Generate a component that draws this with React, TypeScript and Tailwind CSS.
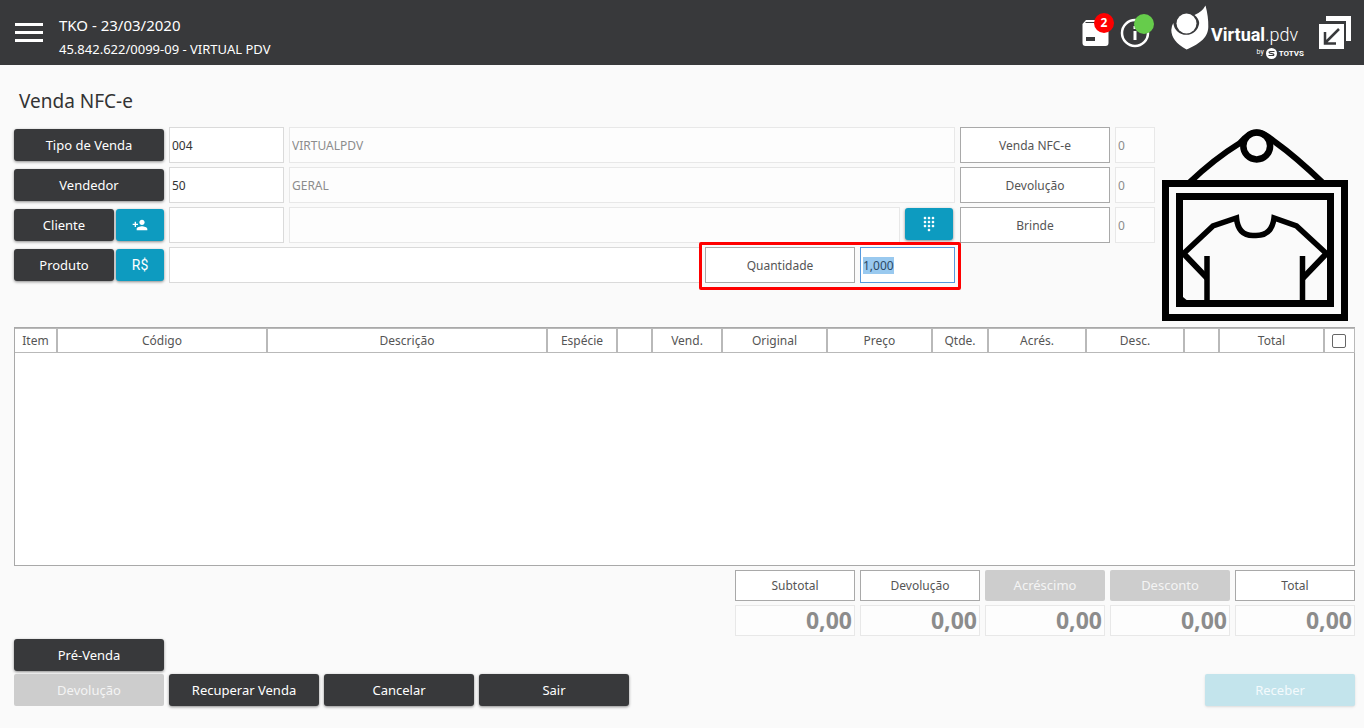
import { useEffect, useRef } from "react";
import type { ReactNode } from "react";
import { MdDialpad, MdPersonAdd } from "react-icons/md";

const COLUMNS = [
  { label: "Item", width: 42 },
  { label: "Código", width: 210 },
  { label: "Descrição", width: 280 },
  { label: "Espécie", width: 70 },
  { label: "", width: 35 },
  { label: "Vend.", width: 70 },
  { label: "Original", width: 105 },
  { label: "Preço", width: 105 },
  { label: "Qtde.", width: 56 },
  { label: "Acrés.", width: 98 },
  { label: "Desc.", width: 98 },
  { label: "", width: 35 },
  { label: "Total", width: 105 },
];

const TOTALS = [
  { label: "Subtotal", action: false },
  { label: "Devolução", action: false },
  { label: "Acréscimo", action: true },
  { label: "Desconto", action: true },
  { label: "Total", action: false },
];

const COUNTERS = ["Venda NFC-e", "Devolução", "Brinde"];

const FIELD = "h-9 min-w-0 border px-[2px] text-xs outline-none";
const EDITABLE = `${FIELD} border-[#dadada] bg-white text-[#333]`;
const READONLY = `${FIELD} border-[#e8e8e8] bg-[#fdfdfd] text-[#8c8c8c]`;
const CAPTION = "flex items-center justify-center border border-[#a9a9a9] bg-white pt-px text-xs text-[#555]";
const DISABLED = "rounded-[2px] bg-[#cdcdcd] pt-px text-[13px] text-[#f4f4f4]";

export default function App() {
  const qtyRef = useRef<HTMLInputElement>(null);

  useEffect(() => {
    qtyRef.current?.focus();
    qtyRef.current?.select();
  }, []);

  return (
    <div className="min-h-screen bg-[#fafafa] font-['Noto_Sans',sans-serif] text-[#333]">
      <Header />
      <main className="pt-5 pr-[9px] pl-[14px]">
        <h1 className="mb-[10px] pl-[5px] text-[19px] leading-8">Venda NFC-e</h1>

        <section className="mb-[6px] flex">
          <div className="flex min-w-0 flex-1 flex-col gap-1">
            <div className="flex items-center gap-[5px]">
              <DarkButton className="w-[150px]">Tipo de Venda</DarkButton>
              <input aria-label="Tipo de Venda" defaultValue="004" className={`${EDITABLE} w-[115px]`} />
              <input aria-label="Descrição do tipo" readOnly value="VIRTUALPDV" className={`${READONLY} flex-1`} />
            </div>
            <div className="flex items-center gap-[5px]">
              <DarkButton className="w-[150px]">Vendedor</DarkButton>
              <input aria-label="Vendedor" defaultValue="50" className={`${EDITABLE} w-[115px]`} />
              <input aria-label="Nome do vendedor" readOnly value="GERAL" className={`${READONLY} flex-1`} />
            </div>
            <div className="flex items-center gap-[5px]">
              <div className="flex gap-[2px]">
                <DarkButton className="w-[100px]">Cliente</DarkButton>
                <BlueButton label="Novo cliente">
                  <MdPersonAdd size={16} />
                </BlueButton>
              </div>
              <input aria-label="Cliente" className={`${EDITABLE} w-[115px]`} />
              <input aria-label="Nome do cliente" readOnly className={`${READONLY} flex-1`} />
              <div className="mr-[2px] pb-[2px]">
                <BlueButton label="Teclado">
                  <MdDialpad size={16} />
                </BlueButton>
              </div>
            </div>
            <div className="flex items-center gap-[5px]">
              <div className="flex gap-[2px]">
                <DarkButton className="w-[100px]">Produto</DarkButton>
                <BlueButton label="Consultar preço">R$</BlueButton>
              </div>
              <input aria-label="Produto" className={`${EDITABLE} flex-1`} />
              <div className="relative flex gap-[5px]">
                <label htmlFor="qty" className={`${CAPTION} h-9 w-[150px]`}>Quantidade</label>
                <input
                  id="qty" ref={qtyRef} defaultValue="1,000"
                  className={`${FIELD} w-[95px] border-[#5599dd] bg-white text-[#333] selection:bg-[#99c9ef] selection:text-[#2c4a66]`}
                />
                <div className="pointer-events-none absolute -inset-x-[6px] -top-[5px] -bottom-[7px] rounded-[2px] border-3 border-[#ff0000]" />
              </div>
            </div>
          </div>

          <div className="ml-[5px] flex flex-col gap-1">
            {COUNTERS.map((label, i) => (
              <div key={label} className="flex gap-[5px]">
                <label htmlFor={`counter-${i}`} className={`${CAPTION} h-9 w-[150px]`}>{label}</label>
                <input id={`counter-${i}`} readOnly value="0" className={`${READONLY} w-10`} />
              </div>
            ))}
          </div>

          <ProductPicture />
        </section>

        {/* Items */}
        <div className="h-[239px] border border-[#a9a9a9] bg-white">
          <table className="w-full table-fixed border-collapse">
            <colgroup>
              {COLUMNS.map((c, i) => (
                <col key={i} style={{ width: c.width }} />
              ))}
              <col style={{ width: 30 }} />
            </colgroup>
            <thead>
              <tr className="h-6">
                {COLUMNS.map((c, i) => (
                  <th key={i} className="border-t border-r-2 border-b border-[#b9b9b9] p-0 text-xs font-normal text-[#555]">
                    {c.label}
                  </th>
                ))}
                <th className="border-t border-r border-b border-[#b9b9b9] p-0">
                  <input
                    type="checkbox" aria-label="Selecionar todos"
                    className="mx-auto block size-[14px] appearance-none rounded-[2px] border border-[#666] bg-white"
                  />
                </th>
              </tr>
            </thead>
          </table>
        </div>

        {/* Totals */}
        <div className="mt-1 flex justify-end gap-[5px]">
          {TOTALS.map((t) => (
            <div key={t.label} className="flex w-[120px] flex-col gap-1">
              {t.action ? (
                <button type="button" disabled className={`${DISABLED} h-[31px]`}>
                  {t.label}
                </button>
              ) : (
                <div className={`${CAPTION} h-[31px]`}>{t.label}</div>
              )}
              <input
                readOnly aria-label={t.label} value="0,00"
                className="h-[31px] w-full border border-[#e8e8e8] bg-[#fdfdfd] px-[2px] text-right text-[23px] font-bold text-[#8c8c8c] outline-none"
              />
            </div>
          ))}
        </div>

        {/* Actions */}
        <div className="mt-[3px] flex items-end justify-between">
          <div className="flex items-end gap-[5px]">
            <div className="flex flex-col gap-[3px]">
              <DarkButton className="w-[150px]">Pré-Venda</DarkButton>
              <button type="button" disabled className={`${DISABLED} h-8 w-[150px]`}>
                Devolução
              </button>
            </div>
            <DarkButton className="w-[150px]">Recuperar Venda</DarkButton>
            <DarkButton className="w-[150px]">Cancelar</DarkButton>
            <DarkButton className="w-[150px]">Sair</DarkButton>
          </div>
          <button type="button" disabled className="h-8 w-[150px] rounded-[2px] bg-[#c3e4ec] pt-px text-[13px] text-[#f4fafc] shadow-sm">
            Receber
          </button>
        </div>
      </main>
    </div>
  );
}

function Header() {
  return (
    <header className="flex h-[65px] items-center bg-[#38393b] pr-[13px] pl-[15px] text-white">
      <button type="button" aria-label="Menu" className="flex flex-col gap-[5px]">
        <span className="h-[3px] w-7 bg-white" />
        <span className="h-[3px] w-7 bg-white" />
        <span className="h-[3px] w-7 bg-white" />
      </button>
      <div className="ml-4 flex-1 pt-2">
        <div className="text-[15px] leading-6">TKO - 23/03/2020</div>
        <div className="text-[13px] leading-6">45.842.622/0099-09 - VIRTUAL PDV</div>
      </div>

      <button type="button" aria-label="Pendências" className="relative">
        <svg width="27" height="27" viewBox="0 0 27 27">
          <path d="M4 1h19l3.5 4v19a3 3 0 0 1-3 3H3.500a3 3 0 0 1-3-3V5Z" fill="#fff" />
          <path d="M3.500 3.500H23" stroke="#38393b" strokeWidth="1" />
          <rect x="4" y="18" width="9" height="4" fill="#38393b" />
        </svg>
        <span className="absolute -top-[6px] left-3 flex size-5 items-center justify-center rounded-full bg-[#ff0000] text-xs font-bold">
          2
        </span>
      </button>
      <button type="button" aria-label="Informações" className="relative ml-[11px]">
        <svg width="30" height="30" viewBox="0 0 30 30" fill="none" stroke="#fff">
          <circle cx="15" cy="15" r="13" strokeWidth="2.500" />
          <path d="M15 13v9M15 8v3" strokeWidth="3" />
        </svg>
        <span className="absolute -top-[4px] left-[14px] size-5 rounded-full bg-[#66cc4b]" />
      </button>

      <div className="ml-[21px] flex items-start">
        <svg width="39" height="46" viewBox="0 0 39 46">
          <path
            d="M34.500 .5C36.500 8 37.500 15 37.300 22C37 34 26 40 15.500 44.500C5 39 .3 32 .3 25Q.5 21 2.300 18A13 13 0 0 0 28.200 18Q27.800 13.500 23.500 10Q31 7 34.500 .5Z"
            fill="#fff"
          />
          <circle cx="15.500" cy="18.500" r="10" fill="#fff" />
        </svg>
        <div className="ml-px w-[93px] pt-[18px] font-[Roboto,sans-serif]">
          <div className="text-lg leading-6">
            <span className="font-bold">Virtual</span>
            <span className="font-light">.pdv</span>
          </div>
          <div className="flex items-center justify-end gap-[2px] text-[8px] leading-[14px]">
            <span className="self-start text-[7px] leading-[10px]">by</span>
            <svg width="11" height="11" viewBox="0 0 11 11">
              <circle cx="5.500" cy="5.500" r="5.500" fill="#fff" />
              <path d="M8.500 3.500H4.500Q2.500 3.500 3.500 5L7.500 6Q8.500 7.500 6.500 7.500H2.500" fill="none" stroke="#38393b" strokeWidth="1.200" />
            </svg>
            <span className="font-bold">TOTVS</span>
          </div>
        </div>
      </div>

      <button type="button" aria-label="Restaurar janela" className="ml-[15px]">
        <svg width="32" height="33" viewBox="0 0 32 33">
          <path d="M7 0H32V25H27V5H7Z" fill="#fff" />
          <rect y="8" width="25" height="25" fill="#fff" />
          <path d="M20 13L6 27M6 16V27.500H17" fill="none" stroke="#38393b" strokeWidth="2.500" />
        </svg>
      </button>
    </header>
  );
}

function DarkButton({ className, children }: { className: string; children: ReactNode }) {
  return (
    <button
      type="button"
      className={`${className} h-8 shrink-0 rounded-[3px] bg-[#38393b] pt-px text-[13px] text-white shadow-[0_1px_3px_rgba(0,0,0,0.45)] hover:bg-[#4a4b4d]`}
    >
      {children}
    </button>
  );
}

function BlueButton({ label, children }: { label: string; children: ReactNode }) {
  return (
    <button
      type="button" aria-label={label}
      className="flex h-8 w-12 shrink-0 items-center justify-center rounded-[3px] bg-[#0d9bc0] font-[Roboto,sans-serif] text-sm text-white shadow-[0_1px_3px_rgba(0,0,0,0.45)]"
    >
      {children}
    </button>
  );
}

// Framed shirt shown while the product has no photo
function ProductPicture() {
  return (
    <svg
      width="186" height="192" viewBox="0 0 186 192" fill="none" stroke="#000" strokeWidth="6.500"
      className="mt-[2px] mr-[7px] ml-[7px] shrink-0"
    >
      <rect x="3.500" y="54.500" width="179" height="134" strokeWidth="7" />
      <rect x="17.500" y="67.500" width="151" height="107" strokeWidth="7" />
      <circle cx="94.700" cy="17" r="13.400" />
      <path d="M27 54Q52 30 78 14Q87 3.500 94.700 3.500Q102 3.500 113 13Q134 28 161 54" strokeWidth="6" />
      <path
        d="M20 126L51 97L74.500 89Q76 106.500 91 106.500H94Q110 106.500 112 89L134.500 97L166 126"
        strokeWidth="5.500"
      />
      <path d="M21 124L45 149M165 124L141 149" strokeWidth="6" />
      <path d="M45 127V174M140.500 127V174" strokeWidth="5.500" />
      <path d="M21 168V173H27Z" fill="#000" stroke="none" />
    </svg>
  );
}
